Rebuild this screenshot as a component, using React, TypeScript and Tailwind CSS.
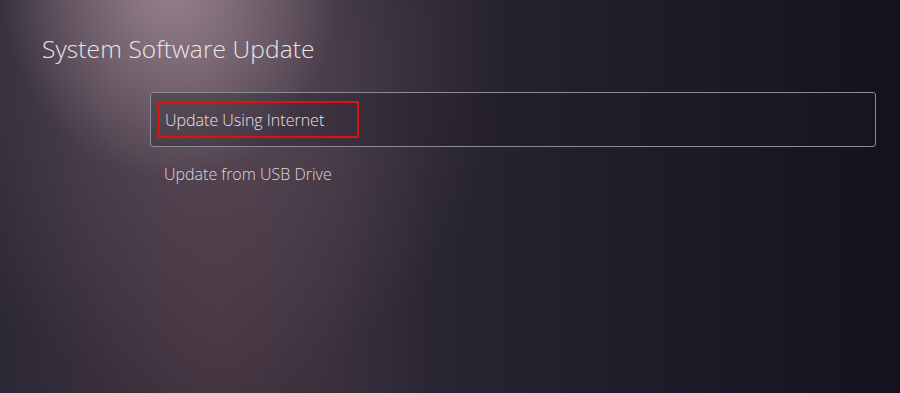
import React from 'react'

const options = [
  { id: 'internet', label: 'Update Using Internet', focused: true },
  { id: 'usb', label: 'Update from USB Drive', focused: false },
]

export default function App() {
  return (
    <div
      className="relative h-[393px] w-[900px] overflow-hidden bg-[#1a1724] text-[#e6e2e8]"
      style={{ fontFamily: '"Open Sans", "Liberation Sans", sans-serif' }}
    >
      {/* light beam backdrop */}
      <div className="absolute inset-0 bg-[radial-gradient(ellipse_170px_200px_at_170px_-20px,rgba(160,138,148,0.9),rgba(160,138,148,0)),radial-gradient(ellipse_300px_340px_at_200px_60px,rgba(110,92,104,0.6),rgba(110,92,104,0)),radial-gradient(ellipse_220px_520px_at_220px_330px,rgba(80,58,70,0.7),rgba(80,58,70,0)),linear-gradient(to_right,#2c2835_0%,#302b38_35%,#221e2b_65%,#15121e_100%)]" />

      <div className="relative px-[42px] pt-[34px]">
        <h1 className="text-[24.5px] font-light leading-[30px] tracking-[0.1px] text-[#e8e4ea]">
          System Software Update
        </h1>

        <div className="ml-[108px] mt-[28px] mr-[-18px] flex flex-col">
          {options.map((o) =>
            o.focused ? (
              <div
                key={o.id}
                className="flex h-[55px] items-center rounded-[3px] border-[1.5px] border-[#8c8a98] bg-[#1d1a26]/30 px-[7px]"
              >
                <div className="flex h-[37px] w-[201px] items-center border-2 border-[#e01010] px-[5px]">
                  <span className="text-[16px] font-light text-[#e4e0e6]">{o.label}</span>
                </div>
              </div>
            ) : (
              <div key={o.id} className="flex h-[53px] items-center px-[14px]">
                <span className="text-[16px] font-light text-[#dcd8de]">{o.label}</span>
              </div>
            )
          )}
        </div>
      </div>
    </div>
  )
}
